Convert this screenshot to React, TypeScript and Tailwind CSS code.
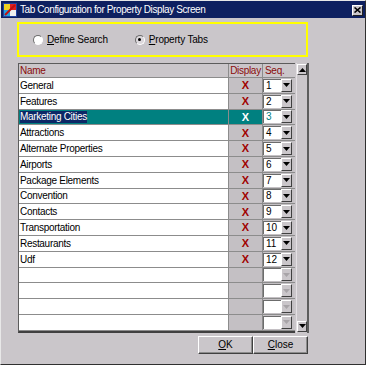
import React from 'react';

const tabs = [
  'General',
  'Features',
  'Marketing Cities',
  'Attractions',
  'Alternate Properties',
  'Airports',
  'Package Elements',
  'Convention',
  'Contacts',
  'Transportation',
  'Restaurants',
  'Udf',
];

const font = { fontFamily: "'Liberation Sans', Arial, sans-serif" };

const ArrowDown = ({ disabled }: { disabled?: boolean }) => (
  <svg width="7" height="4" viewBox="0 0 7 4">
    <path d="M0 0h7L3.5 4z" fill={disabled ? '#a8a4a8' : '#000'} />
  </svg>
);

const SeqBox = ({ value, selected }: { value?: number; selected?: boolean }) => (
  <div className="flex h-[13px] w-[29px]">
    <div
      className={`w-[18px] h-full bg-white border-t border-l border-[#6c6c6c] text-[10px] leading-[12px] pl-[2px] ${
        selected ? 'text-[#008080]' : 'text-black'
      }`}
    >
      {value}
    </div>
    <div className="w-[11px] h-full bg-[#cac6ca] border-t border-l border-white border-r border-b border-r-[#404040] border-b-[#404040] flex items-center justify-center">
      <ArrowDown disabled={value === undefined} />
    </div>
  </div>
);

const Row = ({ name, index }: { name?: string; index: number }) => {
  const selected = index === 2;
  return (
    <div className="flex h-[15.8px] border-b border-[#8c8c8c]">
      <div
        className={`w-[210px] h-full flex items-center pl-[1px] border-r border-[#8c8c8c] text-[10px] tracking-[-0.3px] ${
          selected ? 'bg-[#008080]' : 'bg-white'
        }`}
      >
        {selected ? (
          <span className="bg-[#0c2866] text-white leading-[12px]">{name}</span>
        ) : (
          <span className="text-black">{name}</span>
        )}
      </div>
      <div
        className={`w-[34px] h-full flex items-center justify-center border-r border-[#8c8c8c] text-[11px] font-bold ${
          selected ? 'bg-[#008080] text-white' : 'bg-[#c4c0c4] text-[#a00000]'
        }`}
      >
        {name ? 'X' : ''}
      </div>
      <div className="w-[31px] h-full flex items-center bg-[#c4c0c4]">
        <SeqBox value={name ? index + 1 : undefined} selected={selected} />
      </div>
    </div>
  );
};

const Radio = ({ checked, label, ul }: { checked?: boolean; label: string; ul: string }) => (
  <div className="flex items-center gap-[4px]">
    <div
      className={`w-[10px] h-[10px] rounded-full border border-t-[#6c6c6c] border-l-[#6c6c6c] border-r-white border-b-white flex items-center justify-center ${
        checked ? 'bg-[#dcd8dc]' : 'bg-white'
      }`}
    >
      {checked && <div className="w-[3px] h-[3px] rounded-full bg-black" />}
    </div>
    <span className="text-[10px] tracking-[-0.2px] text-black">
      <span className="underline">{ul}</span>
      {label.slice(ul.length)}
    </span>
  </div>
);

const Button = ({ label, ul, w }: { label: string; ul: string; w: string }) => (
  <div
    className={`${w} h-[18px] flex items-center justify-center bg-[#cac6ca] border border-t-white border-l-white border-r-[#404040] border-b-[#404040] shadow-[inset_-1px_-1px_0_#8c8c8c] text-[10px] text-black`}
  >
    <span className="underline">{ul}</span>
    {label.slice(ul.length)}
  </div>
);

export default function App() {
  const all: (string | undefined)[] = [...tabs, undefined, undefined, undefined, undefined];
  return (
    <div
      className="w-[366px] h-[365px] bg-[#cac6ca] border-t border-l border-t-[#e8e8e8] border-l-[#e8e8e8] border-r border-b border-r-[#303030] border-b-[#303030] flex flex-col overflow-hidden"
      style={font}
    >
      {/* title bar */}
      <div className="h-[17px] bg-[#0e2060] flex items-center pl-[2px] pr-[2px]">
        <svg width="14" height="14" viewBox="0 0 14 14" className="shrink-0">
          <rect x="0" y="0" width="14" height="14" fill="#2040a0" />
          <rect x="1" y="1" width="6" height="6" fill="#f0d020" />
          <rect x="7" y="1" width="6" height="6" fill="#e02020" />
          <rect x="1" y="7" width="6" height="6" fill="#20a0e0" />
          <rect x="7" y="7" width="6" height="6" fill="#f0f0f0" />
          <path d="M2 12L12 2" stroke="#c01010" strokeWidth="2" />
        </svg>
        <span className="ml-[3px] text-white text-[10px] tracking-[-0.4px] leading-none">
          Tab Configuration for Property Display Screen
        </span>
        <div className="ml-auto mt-[1px] w-[11px] h-[11px] bg-[#cac6ca] border border-t-white border-l-white border-r-[#202020] border-b-[#202020] flex items-center justify-center">
          <svg width="7" height="6" viewBox="0 0 7 6">
            <path d="M0.5 0.5L6.5 5.5M6.5 0.5L0.5 5.5" stroke="#000" strokeWidth="1.6" />
          </svg>
        </div>
      </div>

      {/* search type */}
      <div className="ml-[16px] mt-[4px] w-[291px] h-[35px] border-2 border-[#ffff00] flex items-center pl-[14px] gap-[27px]">
        <Radio label="Define Search" ul="D" />
        <Radio checked label="Property Tabs" ul="P" />
      </div>

      {/* table */}
      <div className="ml-[17px] mt-[6px] flex">
        <div className="w-[277px] border-l border-t border-[#5c5c5c] border-b-2 border-b-[#404040]">
          <div className="flex h-[14px] border-b border-[#8c8c8c] text-[10px] tracking-[-0.3px] text-[#8a0c0c]">
            <div className="w-[210px] pl-[1px] border-r border-[#8c8c8c] leading-[14px]">Name</div>
            <div className="w-[34px] border-r border-[#8c8c8c] leading-[14px] text-center">Display</div>
            <div className="w-[31px] pl-[2px] leading-[14px]">Seq.</div>
          </div>
          {all.map((name, i) => (
            <Row key={i} name={name} index={i} />
          ))}
        </div>
        <div className="ml-[1px] w-[13px] flex flex-col border-l border-[#e4e0e4] border-r-2 border-r-[#5c5c5c]">
          <div className="h-[11px] mt-[1px] bg-[#cac6ca] border border-t-white border-l-white border-r-[#404040] border-b-[#404040] flex items-center justify-center">
            <svg width="7" height="4" viewBox="0 0 7 4">
              <path d="M0 4h7L3.5 0z" fill="#000" />
            </svg>
          </div>
          <div className="flex-1" />
          <div className="h-[11px] mb-[1px] bg-[#cac6ca] border border-t-white border-l-white border-r-[#404040] border-b-[#404040] flex items-center justify-center">
            <ArrowDown />
          </div>
        </div>
      </div>

      {/* buttons */}
      <div className="mt-[3px] ml-[197px] flex">
        <Button label="OK" ul="O" w="w-[55px]" />
        <Button label="Close" ul="C" w="w-[55px]" />
      </div>
    </div>
  );
}
